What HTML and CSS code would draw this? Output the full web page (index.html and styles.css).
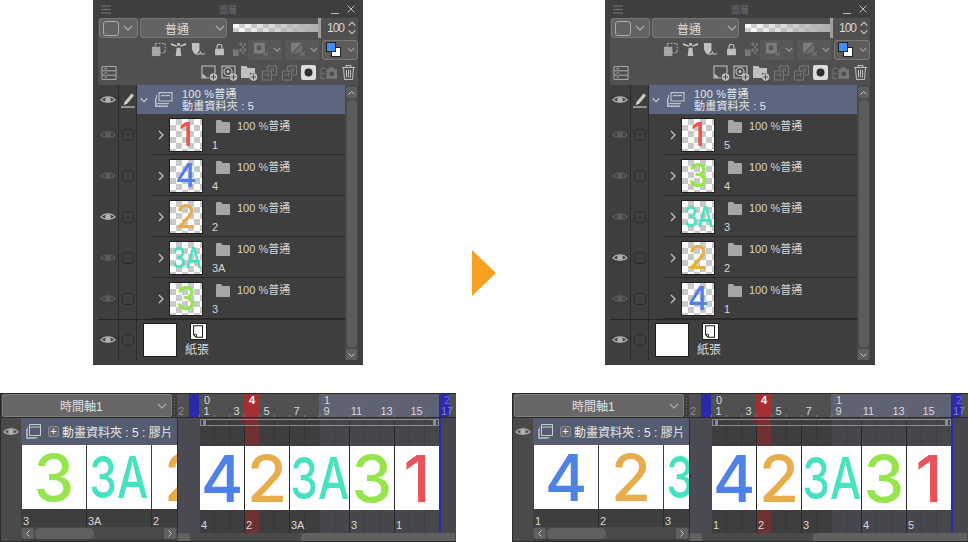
FILE: index.html
```html
<!DOCTYPE html>
<html>
<head>
    <title>Layer order and timeline</title>
    <link rel="stylesheet" href="styles.css">
</head>
<body>
    <svg class="icon-defs" width="0" height="0">
        <symbol id="i-eye" viewBox="0 0 16 16"><path d="M1 8C4 3.8 12 3.8 15 8 12 10.8 4 10.8 1 8Z" fill="none" stroke="currentColor" stroke-width="1.3"/><circle cx="8" cy="7.8" r="2.8" fill="currentColor"/></symbol>
        <symbol id="i-pen" viewBox="0 0 16 16"><path d="M4.5 10L11.5 1.5 14 3.5 7 12 3.5 13Z" fill="currentColor"/><path d="M1 15H15" stroke="currentColor" stroke-width="1.2"/></symbol>
        <symbol id="i-right" viewBox="0 0 8 12"><path d="M2 2L6 6 2 10" fill="none" stroke="currentColor" stroke-width="1.3"/></symbol>
        <symbol id="i-down" viewBox="0 0 12 8"><path d="M2 2L6 6 10 2" fill="none" stroke="currentColor" stroke-width="1.3"/></symbol>
        <symbol id="i-up" viewBox="0 0 12 8"><path d="M2 6L6 2 10 6" fill="none" stroke="currentColor" stroke-width="1.3"/></symbol>
        <symbol id="i-folder" viewBox="0 0 14 13"><path d="M0 1Q0 0 1 0H5L6.5 2H13Q14 2 14 3V12Q14 13 13 13H1Q0 13 0 12Z" fill="currentColor"/></symbol>
        <symbol id="i-stack" viewBox="0 0 18 15"><path d="M4 .6H17V9H4Z" fill="none" stroke="currentColor" stroke-width="1.2"/><path d="M6 3H15V4.2H6Z" fill="currentColor"/><path d="M2 3V11H14V12.2H1V3ZM0 6V15H13V13.5H1.5V6Z" fill="currentColor"/></symbol>
        <symbol id="i-clip" viewBox="0 0 16 16"><path d="M1 5H10V15H1Z" fill="currentColor" opacity=".75"/><path d="M4.5 1.5H15V11.5H4.5Z" fill="none" stroke="currentColor" stroke-dasharray="2 1.5"/></symbol>
        <symbol id="i-light" viewBox="0 0 16 16"><path d="M6 6H10L11 15H5ZM0 1L6 3.5V5L0 3.5ZM16 1L10 3.5V5L16 3.5ZM6.500 1H9.500V4H6.500Z" fill="currentColor"/></symbol>
        <symbol id="i-ref" viewBox="0 0 16 16"><path d="M1 1H9V9L6 13 4 13 1 8Z" fill="currentColor"/><path d="M5 12Q9 15 10 11L11 13 15 12.5" fill="none" stroke="currentColor" stroke-width="1.2"/></symbol>
        <symbol id="i-lock" viewBox="0 0 16 16"><path d="M2.500 7H13.500V15H2.500Z" fill="currentColor"/><path d="M5 7V4.500A3 3 0 0 1 11 4.500V7" fill="none" stroke="currentColor" stroke-width="1.4"/></symbol>
        <symbol id="i-alpha" viewBox="0 0 16 16"><path d="M8 1H11V4H8ZM13 1H15V4H13ZM11 4H13V7H11ZM8 7H11V10H8ZM13 7H15V10H13ZM11 10H13V13H11ZM1 8H7V15H1Z" fill="currentColor"/></symbol>
        <symbol id="i-ruler-x" viewBox="0 0 20 18"><path d="M1 1H14V11L11 14H1Z" fill="currentColor"/><circle cx="7" cy="7" r="3" fill="#585858"/><path d="M12 12L18 17M18 12L12 17" stroke="currentColor" stroke-width="1.2"/></symbol>
        <symbol id="i-tri-x" viewBox="0 0 20 18"><path d="M1 1H14L1 14Z" fill="currentColor"/><path d="M14 3V11L8 14H3Z" fill="currentColor" opacity=".6"/><path d="M12 12L18 17M18 12L12 17" stroke="currentColor" stroke-width="1.2"/></symbol>
        <symbol id="i-list" viewBox="0 0 16 14"><path d="M1 .5H15V13.500H1ZM1 4.800H15M1 9.200H15M3.500 2.700H6M3.500 7H6M3.500 11.300H6" fill="none" stroke="currentColor"/></symbol>
        <symbol id="i-new" viewBox="0 0 17 16"><path d="M8 13H1V1H14V8" fill="none" stroke="currentColor" stroke-width="1.1"/><path d="M1.500 8.500L6 12.500H1.500Z" fill="currentColor"/><circle cx="12.500" cy="12" r="3.800" fill="currentColor"/><path d="M12.500 9.500V14.500M10 12H15" stroke="#505050"/></symbol>
        <symbol id="i-new2" viewBox="0 0 17 16"><path d="M8 13H1V1H14V8" fill="none" stroke="currentColor" stroke-width="1.1"/><circle cx="7" cy="6.500" r="4" fill="none" stroke="currentColor" stroke-width="1.1"/><circle cx="7" cy="6.500" r="1.500" fill="currentColor"/><circle cx="12.500" cy="12" r="3.800" fill="currentColor"/><path d="M12.500 9.500V14.500M10 12H15" stroke="#505050"/></symbol>
        <symbol id="i-newfolder" viewBox="0 0 17 16"><path d="M0 1H5L7 3H14V8H9V13H0Z" fill="currentColor"/><circle cx="12.500" cy="12" r="3.800" fill="currentColor"/><path d="M12.500 9.500V14.500M10 12H15" stroke="#505050"/></symbol>
        <symbol id="i-merge" viewBox="0 0 16 16"><path d="M6 5V1H15V10H11M1 6H10V15H1Z" fill="none" stroke="currentColor" stroke-width="1.1"/><path d="M3 10H7M7 8V12M9 4H12V7" fill="none" stroke="currentColor"/></symbol>
        <symbol id="i-mask" viewBox="0 0 15 15"><path d="M2 0H13Q15 0 15 2V13Q15 15 13 15H2Q0 15 0 13V2Q0 0 2 0Z" fill="currentColor"/><circle cx="7.500" cy="7.500" r="4" fill="#2e2e2e"/></symbol>
        <symbol id="i-camera" viewBox="0 0 18 14"><path d="M1 2H6M1 2V13H6" fill="none" stroke="currentColor"/><path d="M7 3H9L10 1H14L15 3H18V13H7Z" fill="currentColor"/><circle cx="12.500" cy="8" r="2.500" fill="#505050"/><path d="M2 7.500H6" stroke="currentColor"/></symbol>
        <symbol id="i-trash" viewBox="0 0 13 15"><path d="M0 2.500H13M4 2.500V.5H9V2.500M1.500 2.500L2.500 14.500H10.500L11.500 2.500M4.500 5V12.500M6.500 5V12.500M8.500 5V12.500" fill="none" stroke="currentColor"/></symbol>
        <symbol id="i-menu" viewBox="0 0 10 9"><path d="M0 1H10M0 4.500H10M0 8H10" stroke="currentColor"/></symbol>
        <symbol id="i-close" viewBox="0 0 8 8"><path d="M.5 .5L7.500 7.500M7.500 .5L.5 7.500" stroke="currentColor"/></symbol>
        <symbol id="i-page" viewBox="0 0 14 16"><path d="M1 1H12V15H4L1 12Z" fill="none" stroke="#222" stroke-width="1.300"/><path d="M1 11.500H4.500V15" fill="none" stroke="#222"/></symbol>
        <symbol id="i-film" viewBox="0 0 15 15"><path d="M3.500 .5H14.500V11.500H3.500Z" fill="none" stroke="currentColor"/><path d="M3.500 3H14.500" stroke="currentColor"/><path d="M1.500 3V13.500H12M.5 5V14.500H10" fill="none" stroke="currentColor" stroke-width=".7"/></symbol>
    </svg>

    <div class="page">
        <!-- before -->
        <div class="side">
            <div class="side-top">
                <div class="layer-panel">
                    <div class="panel-title">
                        <svg class="title-menu"><use href="#i-menu"/></svg>
                        <span class="title-text">圖層</span>
                        <span class="title-min"></span>
                        <svg class="title-close"><use href="#i-close"/></svg>
                    </div>
                    <div class="toolbar">
                        <div class="tool-row tool-row-a">
                            <div class="dropdown dd-shape"><span class="shape-box"></span><svg class="dd-arrow"><use href="#i-down"/></svg></div>
                            <div class="dropdown dd-blend"><span class="dd-label">普通</span><svg class="dd-arrow"><use href="#i-down"/></svg></div>
                            <div class="opacity-bar"></div>
                            <span class="opacity-handle"></span>
                            <span class="opacity-value">100</span>
                            <div class="spinner"><svg><use href="#i-up"/></svg><svg><use href="#i-down"/></svg></div>
                        </div>
                        <div class="tool-row tool-row-b">
                            <svg class="tool"><use href="#i-clip"/></svg>
                            <svg class="tool"><use href="#i-light"/></svg>
                            <svg class="tool"><use href="#i-ref"/></svg>
                            <svg class="tool tool-lock"><use href="#i-lock"/></svg>
                            <svg class="tool tool-alpha"><use href="#i-alpha"/></svg>
                            <div class="tool-btn"><svg class="tool-wide"><use href="#i-ruler-x"/></svg><svg class="btn-arrow"><use href="#i-down"/></svg></div>
                            <div class="tool-btn"><svg class="tool-wide"><use href="#i-tri-x"/></svg><svg class="btn-arrow"><use href="#i-down"/></svg></div>
                            <div class="color-btn"><span class="color-swatch"><i class="swatch-white"></i><i class="swatch-blue"></i></span><svg class="btn-arrow"><use href="#i-down"/></svg></div>
                        </div>
                        <div class="tool-row tool-row-c">
                            <svg class="tool-list"><use href="#i-list"/></svg>
                            <svg class="tool-c"><use href="#i-new"/></svg>
                            <svg class="tool-c"><use href="#i-new2"/></svg>
                            <svg class="tool-c"><use href="#i-newfolder"/></svg>
                            <svg class="tool-c tool-dim"><use href="#i-merge"/></svg>
                            <svg class="tool-c tool-dim"><use href="#i-merge"/></svg>
                            <svg class="tool-mask"><use href="#i-mask"/></svg>
                            <svg class="tool-c tool-dim"><use href="#i-camera"/></svg>
                            <svg class="tool-trash"><use href="#i-trash"/></svg>
                        </div>
                    </div>
                    <div class="layer-list">
                        <div class="layer-rows">
                            <div class="layer-row folder-row">
                                <div class="eye-cell"><svg class="eye"><use href="#i-eye"/></svg></div>
                                <div class="pen-cell"><svg class="pen"><use href="#i-pen"/></svg></div>
                                <div class="folder-main">
                                    <svg class="folder-chev"><use href="#i-down"/></svg>
                                    <svg class="folder-stack"><use href="#i-stack"/></svg>
                                    <div class="folder-text"><div>100 %普通</div><div>動畫資料夾 : 5</div></div>
                                </div>
                            </div>
                            <div class="layer-row">
                                <div class="eye-cell"><svg class="eye eye-dim"><use href="#i-eye"/></svg></div>
                                <div class="pen-cell"><span class="check"></span></div>
                                <div class="layer-main">
                                    <svg class="row-chev"><use href="#i-right"/></svg>
                                    <div class="thumb c-red">1</div>
                                    <div class="layer-info"><div class="blend-line"><svg class="folder-ico"><use href="#i-folder"/></svg>100 %普通</div><div class="layer-name">1</div></div>
                                </div>
                            </div>
                            <div class="layer-row">
                                <div class="eye-cell"><svg class="eye eye-dim"><use href="#i-eye"/></svg></div>
                                <div class="pen-cell"><span class="check"></span></div>
                                <div class="layer-main">
                                    <svg class="row-chev"><use href="#i-right"/></svg>
                                    <div class="thumb c-blue">4</div>
                                    <div class="layer-info"><div class="blend-line"><svg class="folder-ico"><use href="#i-folder"/></svg>100 %普通</div><div class="layer-name">4</div></div>
                                </div>
                            </div>
                            <div class="layer-row">
                                <div class="eye-cell"><svg class="eye"><use href="#i-eye"/></svg></div>
                                <div class="pen-cell"><span class="check"></span></div>
                                <div class="layer-main">
                                    <svg class="row-chev"><use href="#i-right"/></svg>
                                    <div class="thumb c-orange">2</div>
                                    <div class="layer-info"><div class="blend-line"><svg class="folder-ico"><use href="#i-folder"/></svg>100 %普通</div><div class="layer-name">2</div></div>
                                </div>
                            </div>
                            <div class="layer-row">
                                <div class="eye-cell"><svg class="eye eye-dim"><use href="#i-eye"/></svg></div>
                                <div class="pen-cell"><span class="check"></span></div>
                                <div class="layer-main">
                                    <svg class="row-chev"><use href="#i-right"/></svg>
                                    <div class="thumb thumb-pair c-teal"><span class="squeeze">3A</span></div>
                                    <div class="layer-info"><div class="blend-line"><svg class="folder-ico"><use href="#i-folder"/></svg>100 %普通</div><div class="layer-name">3A</div></div>
                                </div>
                            </div>
                            <div class="layer-row">
                                <div class="eye-cell"><svg class="eye eye-dim"><use href="#i-eye"/></svg></div>
                                <div class="pen-cell"><span class="check"></span></div>
                                <div class="layer-main">
                                    <svg class="row-chev"><use href="#i-right"/></svg>
                                    <div class="thumb c-green">3</div>
                                    <div class="layer-info"><div class="blend-line"><svg class="folder-ico"><use href="#i-folder"/></svg>100 %普通</div><div class="layer-name">3</div></div>
                                </div>
                            </div>
                            <div class="layer-row paper-row">
                                <div class="eye-cell"><svg class="eye"><use href="#i-eye"/></svg></div>
                                <div class="pen-cell"><span class="check"></span></div>
                                <div class="paper-main">
                                    <div class="paper-swatch"></div>
                                    <div class="paper-info"><div class="paper-ico"><svg><use href="#i-page"/></svg></div><div class="paper-name">紙張</div></div>
                                </div>
                            </div>
                        </div>
                        <div class="v-scroll">
                            <div class="scroll-btn"><svg><use href="#i-up"/></svg></div>
                            <div class="scroll-thumb"></div>
                            <div class="scroll-btn"><svg><use href="#i-down"/></svg></div>
                        </div>
                    </div>
                </div>
                <div class="arrow"></div>
            </div>

            <div class="timeline">
                <div class="tl-top">
                    <div class="tl-select"><span class="tl-select-label">時間軸1</span><svg class="dd-arrow"><use href="#i-down"/></svg></div>
                    <div class="tl-grip"></div>
                    <div class="ruler">
                        <div class="ruler-secs"><span class="sec-a">0</span><span class="sec-b">4</span><span class="sec-c">1</span><span class="sec-d">2</span></div>
                        <div class="ruler-frames"><span class="frame-prev">2</span><span>1</span><span>3</span><span>5</span><span>7</span><span>9</span><span>11</span><span>13</span><span>15</span><span class="frame-next">17</span></div>
                    </div>
                </div>
                <div class="tl-body">
                    <div class="tl-left">
                        <div class="tl-eye"><svg class="eye"><use href="#i-eye"/></svg></div>
                        <div class="tl-track">
                            <div class="track-head">
                                <svg class="track-film"><use href="#i-film"/></svg>
                                <span class="track-plus">+</span>
                                <span class="track-name">動畫資料夾 : 5 : 膠片</span>
                            </div>
                            <div class="strip">
                                <div class="strip-cell c-green">3</div>
                                <div class="strip-cell cell-pair c-teal"><span class="squeeze">3A</span></div>
                                <div class="strip-cell c-orange">2</div>
                            </div>
                            <div class="strip-names"><span>3</span><span>3A</span><span>2</span></div>
                            <div class="h-scroll">
                                <span class="h-btn"><svg><use href="#i-right"/></svg></span>
                                <span class="h-thumb"></span>
                                <span class="h-btn"><svg><use href="#i-right"/></svg></span>
                            </div>
                        </div>
                    </div>
                    <div class="tl-right">
                        <div class="tl-tracks">
                            <div class="tl-sep"></div>
                            <div class="frames">
                                <div class="frames-head">
                                    <div class="range-bar"><i></i><i></i></div>
                                    <div class="head-cells"><span class="w3"></span><span class="w3"></span><span class="w4"></span><span class="w3"></span><span class="w3"></span></div>
                                </div>
                                <div class="frame-cells">
                                    <div class="w3 frame-cell c-blue">4</div>
                                    <div class="w3 frame-cell c-orange">2</div>
                                    <div class="w4 frame-cell cell-pair c-teal"><span class="squeeze">3A</span></div>
                                    <div class="w3 frame-cell c-green">3</div>
                                    <div class="w3 frame-cell c-red">1</div>
                                </div>
                                <div class="frame-names"><span class="w3">4</span><span class="w3">2</span><span class="w4">3A</span><span class="w3">3</span><span class="w3">1</span></div>
                            </div>
                            <div class="frames-rest"></div>
                        </div>
                        <div class="tl-hbar"><span class="tl-hbtn"></span><span class="tl-hthumb"></span></div>
                    </div>
                </div>
            </div>
        </div>

        <!-- after -->
        <div class="side">
            <div class="side-top">
                <div class="layer-panel">
                    <div class="panel-title">
                        <svg class="title-menu"><use href="#i-menu"/></svg>
                        <span class="title-text">圖層</span>
                        <span class="title-min"></span>
                        <svg class="title-close"><use href="#i-close"/></svg>
                    </div>
                    <div class="toolbar">
                        <div class="tool-row tool-row-a">
                            <div class="dropdown dd-shape"><span class="shape-box"></span><svg class="dd-arrow"><use href="#i-down"/></svg></div>
                            <div class="dropdown dd-blend"><span class="dd-label">普通</span><svg class="dd-arrow"><use href="#i-down"/></svg></div>
                            <div class="opacity-bar"></div>
                            <span class="opacity-handle"></span>
                            <span class="opacity-value">100</span>
                            <div class="spinner"><svg><use href="#i-up"/></svg><svg><use href="#i-down"/></svg></div>
                        </div>
                        <div class="tool-row tool-row-b">
                            <svg class="tool"><use href="#i-clip"/></svg>
                            <svg class="tool"><use href="#i-light"/></svg>
                            <svg class="tool"><use href="#i-ref"/></svg>
                            <svg class="tool tool-lock"><use href="#i-lock"/></svg>
                            <svg class="tool tool-alpha"><use href="#i-alpha"/></svg>
                            <div class="tool-btn"><svg class="tool-wide"><use href="#i-ruler-x"/></svg><svg class="btn-arrow"><use href="#i-down"/></svg></div>
                            <div class="tool-btn"><svg class="tool-wide"><use href="#i-tri-x"/></svg><svg class="btn-arrow"><use href="#i-down"/></svg></div>
                            <div class="color-btn"><span class="color-swatch"><i class="swatch-white"></i><i class="swatch-blue"></i></span><svg class="btn-arrow"><use href="#i-down"/></svg></div>
                        </div>
                        <div class="tool-row tool-row-c">
                            <svg class="tool-list"><use href="#i-list"/></svg>
                            <svg class="tool-c"><use href="#i-new"/></svg>
                            <svg class="tool-c"><use href="#i-new2"/></svg>
                            <svg class="tool-c"><use href="#i-newfolder"/></svg>
                            <svg class="tool-c tool-dim"><use href="#i-merge"/></svg>
                            <svg class="tool-c tool-dim"><use href="#i-merge"/></svg>
                            <svg class="tool-mask"><use href="#i-mask"/></svg>
                            <svg class="tool-c tool-dim"><use href="#i-camera"/></svg>
                            <svg class="tool-trash"><use href="#i-trash"/></svg>
                        </div>
                    </div>
                    <div class="layer-list">
                        <div class="layer-rows">
                            <div class="layer-row folder-row">
                                <div class="eye-cell"><svg class="eye"><use href="#i-eye"/></svg></div>
                                <div class="pen-cell"><svg class="pen"><use href="#i-pen"/></svg></div>
                                <div class="folder-main">
                                    <svg class="folder-chev"><use href="#i-down"/></svg>
                                    <svg class="folder-stack"><use href="#i-stack"/></svg>
                                    <div class="folder-text"><div>100 %普通</div><div>動畫資料夾 : 5</div></div>
                                </div>
                            </div>
                            <div class="layer-row">
                                <div class="eye-cell"><svg class="eye eye-dim"><use href="#i-eye"/></svg></div>
                                <div class="pen-cell"><span class="check"></span></div>
                                <div class="layer-main">
                                    <svg class="row-chev"><use href="#i-right"/></svg>
                                    <div class="thumb c-red">1</div>
                                    <div class="layer-info"><div class="blend-line"><svg class="folder-ico"><use href="#i-folder"/></svg>100 %普通</div><div class="layer-name">5</div></div>
                                </div>
                            </div>
                            <div class="layer-row">
                                <div class="eye-cell"><svg class="eye eye-dim"><use href="#i-eye"/></svg></div>
                                <div class="pen-cell"><span class="check"></span></div>
                                <div class="layer-main">
                                    <svg class="row-chev"><use href="#i-right"/></svg>
                                    <div class="thumb c-green">3</div>
                                    <div class="layer-info"><div class="blend-line"><svg class="folder-ico"><use href="#i-folder"/></svg>100 %普通</div><div class="layer-name">4</div></div>
                                </div>
                            </div>
                            <div class="layer-row">
                                <div class="eye-cell"><svg class="eye eye-dim"><use href="#i-eye"/></svg></div>
                                <div class="pen-cell"><span class="check"></span></div>
                                <div class="layer-main">
                                    <svg class="row-chev"><use href="#i-right"/></svg>
                                    <div class="thumb thumb-pair c-teal"><span class="squeeze">3A</span></div>
                                    <div class="layer-info"><div class="blend-line"><svg class="folder-ico"><use href="#i-folder"/></svg>100 %普通</div><div class="layer-name">3</div></div>
                                </div>
                            </div>
                            <div class="layer-row">
                                <div class="eye-cell"><svg class="eye"><use href="#i-eye"/></svg></div>
                                <div class="pen-cell"><span class="check"></span></div>
                                <div class="layer-main">
                                    <svg class="row-chev"><use href="#i-right"/></svg>
                                    <div class="thumb c-orange">2</div>
                                    <div class="layer-info"><div class="blend-line"><svg class="folder-ico"><use href="#i-folder"/></svg>100 %普通</div><div class="layer-name">2</div></div>
                                </div>
                            </div>
                            <div class="layer-row">
                                <div class="eye-cell"><svg class="eye eye-dim"><use href="#i-eye"/></svg></div>
                                <div class="pen-cell"><span class="check"></span></div>
                                <div class="layer-main">
                                    <svg class="row-chev"><use href="#i-right"/></svg>
                                    <div class="thumb c-blue">4</div>
                                    <div class="layer-info"><div class="blend-line"><svg class="folder-ico"><use href="#i-folder"/></svg>100 %普通</div><div class="layer-name">1</div></div>
                                </div>
                            </div>
                            <div class="layer-row paper-row">
                                <div class="eye-cell"><svg class="eye"><use href="#i-eye"/></svg></div>
                                <div class="pen-cell"><span class="check"></span></div>
                                <div class="paper-main">
                                    <div class="paper-swatch"></div>
                                    <div class="paper-info"><div class="paper-ico"><svg><use href="#i-page"/></svg></div><div class="paper-name">紙張</div></div>
                                </div>
                            </div>
                        </div>
                        <div class="v-scroll">
                            <div class="scroll-btn"><svg><use href="#i-up"/></svg></div>
                            <div class="scroll-thumb"></div>
                            <div class="scroll-btn"><svg><use href="#i-down"/></svg></div>
                        </div>
                    </div>
                </div>
            </div>

            <div class="timeline">
                <div class="tl-top">
                    <div class="tl-select"><span class="tl-select-label">時間軸1</span><svg class="dd-arrow"><use href="#i-down"/></svg></div>
                    <div class="tl-grip"></div>
                    <div class="ruler">
                        <div class="ruler-secs"><span class="sec-a">0</span><span class="sec-b">4</span><span class="sec-c">1</span><span class="sec-d">2</span></div>
                        <div class="ruler-frames"><span class="frame-prev">2</span><span>1</span><span>3</span><span>5</span><span>7</span><span>9</span><span>11</span><span>13</span><span>15</span><span class="frame-next">17</span></div>
                    </div>
                </div>
                <div class="tl-body">
                    <div class="tl-left">
                        <div class="tl-eye"><svg class="eye"><use href="#i-eye"/></svg></div>
                        <div class="tl-track">
                            <div class="track-head">
                                <svg class="track-film"><use href="#i-film"/></svg>
                                <span class="track-plus">+</span>
                                <span class="track-name">動畫資料夾 : 5 : 膠片</span>
                            </div>
                            <div class="strip">
                                <div class="strip-cell c-blue">4</div>
                                <div class="strip-cell c-orange">2</div>
                                <div class="strip-cell cell-pair c-teal"><span class="squeeze">3A</span></div>
                            </div>
                            <div class="strip-names"><span>1</span><span>2</span><span>3</span></div>
                            <div class="h-scroll">
                                <span class="h-btn"><svg><use href="#i-right"/></svg></span>
                                <span class="h-thumb"></span>
                                <span class="h-btn"><svg><use href="#i-right"/></svg></span>
                            </div>
                        </div>
                    </div>
                    <div class="tl-right">
                        <div class="tl-tracks">
                            <div class="tl-sep"></div>
                            <div class="frames">
                                <div class="frames-head">
                                    <div class="range-bar"><i></i><i></i></div>
                                    <div class="head-cells"><span class="w3"></span><span class="w3"></span><span class="w4"></span><span class="w3"></span><span class="w3"></span></div>
                                </div>
                                <div class="frame-cells">
                                    <div class="w3 frame-cell c-blue">4</div>
                                    <div class="w3 frame-cell c-orange">2</div>
                                    <div class="w4 frame-cell cell-pair c-teal"><span class="squeeze">3A</span></div>
                                    <div class="w3 frame-cell c-green">3</div>
                                    <div class="w3 frame-cell c-red">1</div>
                                </div>
                                <div class="frame-names"><span class="w3">1</span><span class="w3">2</span><span class="w4">3</span><span class="w3">4</span><span class="w3">5</span></div>
                            </div>
                            <div class="frames-rest"></div>
                        </div>
                        <div class="tl-hbar"><span class="tl-hbtn"></span><span class="tl-hthumb"></span></div>
                    </div>
                </div>
            </div>
        </div>
    </div>
</body>
</html>
```

FILE: styles.css
```css
body {
    margin: 0;
    background-color: #fff;
    font-family: "Liberation Sans", "Noto Sans CJK TC", sans-serif;
    font-size: 11px;
    color: #d8d8d8;
    overflow: hidden;
}
svg {
    display: block;
    flex: none;
}
.icon-defs {
    position: absolute;
}
.page {
    display: grid;
    grid-template-columns: 512px 456px;
}
.side-top {
    display: flex;
    height: 393px;
    padding-left: 93px;
}
.arrow {
    width: 24px;
    height: 46px;
    margin: 250px 0 0 109px;
    background-color: #f7a023;
    clip-path: polygon(0 0, 100% 50%, 0 100%);
}

/* digit colours */
.c-red { color: #e85357; }
.c-blue { color: #4f82e6; }
.c-orange { color: #e8ad4b; }
.c-teal { color: #47e3c0; }
.c-green { color: #96e54c; }
.thumb, .strip-cell, .frame-cell {
    font-family: Inter, "Liberation Sans", sans-serif;
    font-weight: 500;
}
.squeeze {
    display: inline-block;
    transform: scaleX(.76);
    transform-origin: center;
}
.thumb-pair .squeeze, .cell-pair .squeeze {
    margin: 0 -20px;
}
.strip-cell.cell-pair, .frame-cell.cell-pair {
    font-size: 58px;
}
.thumb.thumb-pair {
    font-size: 29px;
}

/* layer panel */
.layer-panel {
    width: 260px;
    height: 360px;
    padding: 0 5px 5px;
    background-color: #3f3f3f;
}
.panel-title {
    display: flex;
    align-items: center;
    height: 18px;
    color: #777;
}
.title-menu {
    width: 10px;
    height: 9px;
    margin-left: 3px;
}
.title-text {
    margin-left: 108px;
    font-size: 9px;
    color: #6d6d6d;
}
.title-min {
    width: 8px;
    height: 1px;
    margin: 8px 0 0 94px;
    background-color: #bbb;
}
.title-close {
    width: 8px;
    height: 8px;
    margin-left: 8px;
    color: #bbb;
}
.toolbar {
    height: 67px;
    background-color: #505050;
}
.tool-row {
    display: flex;
    align-items: center;
    box-sizing: border-box;
}
.tool-row-a {
    align-items: flex-start;
    height: 21px;
    padding-left: 1px;
}
.tool-row-a .opacity-bar {
    margin-top: 6px;
}
.tool-row-a .opacity-value {
    line-height: 20px;
}
.tool-row-a .spinner {
    margin-top: 2px;
}
.tool-row-b {
    height: 25px;
    padding: 0 0 4px 53px;
    color: #c0c0c0;
}
.tool-row-c {
    height: 21px;
    padding: 0 0 4px 3px;
    color: #c0c0c0;
}
.dropdown {
    display: flex;
    align-items: center;
    box-sizing: border-box;
    height: 20px;
    background-color: #636363;
    border: 1px solid #777;
    border-radius: 3px;
}
.dd-shape {
    width: 39px;
    padding-left: 3px;
}
.shape-box {
    width: 14px;
    height: 13px;
    border: 1px solid #aaa;
    border-radius: 3px;
}
.dd-arrow {
    width: 12px;
    height: 8px;
    color: #a8a8a8;
}
.dd-shape .dd-arrow {
    margin-left: 3px;
}
.dd-blend {
    width: 87px;
    margin-left: 2px;
}
.dd-label {
    margin-left: 24px;
    font-size: 12px;
    color: #ddd;
}
.dd-blend .dd-arrow {
    margin-left: 25px;
}
.opacity-bar {
    width: 85px;
    height: 8px;
    margin-left: 6px;
    background:
        linear-gradient(90deg, rgba(185,185,185,0), #b0b0b0 95%),
        repeating-conic-gradient(#d0d0d0 0 25%, #fff 0 50%) 0 0 / 12px 8px;
}
.opacity-handle {
    width: 3px;
    height: 20px;
    background-color: #a0a0a0;
}
.opacity-value {
    margin-left: 6px;
    font-size: 12px;
    letter-spacing: -1px;
}
.spinner {
    margin-left: 3px;
    color: #c8c8c8;
}
.spinner svg {
    width: 10px;
    height: 8px;
}
.tool {
    width: 15px;
    height: 15px;
    margin-right: 5px;
}
.tool-lock {
    width: 13px;
    margin: 0 6px 0 2px;
}
.tool-alpha {
    margin-right: 1px;
    color: #777;
}
.tool-dim {
    color: #777;
}
.tool-btn {
    display: flex;
    align-items: center;
    width: 34px;
    height: 20px;
    margin-right: 2px;
    padding-left: 5px;
    box-sizing: border-box;
    color: #7c7c7c;
    background-color: #585858;
    border-radius: 2px;
}
.tool-btn + .tool-btn {
    margin-left: 1px;
}
.tool-wide {
    width: 17px;
    height: 15px;
}
.btn-arrow {
    width: 10px;
    height: 7px;
    margin-left: 2px;
    color: #999;
}
.color-btn {
    display: flex;
    align-items: center;
    box-sizing: border-box;
    width: 36px;
    height: 20px;
    margin-left: 1px;
    padding-left: 3px;
    background-color: #5c5c5c;
    border: 1px solid #777;
    border-radius: 3px;
}
.color-swatch {
    position: relative;
    width: 15px;
    height: 15px;
    margin-right: 3px;
}
.swatch-blue, .swatch-white {
    position: absolute;
}
.swatch-blue {
    left: 0;
    top: 0;
    width: 10px;
    height: 10px;
    background-color: #3d8ff0;
    border: 1px solid #222;
    box-sizing: border-box;
}
.swatch-white {
    left: 5px;
    top: 5px;
    width: 10px;
    height: 10px;
    background-color: #fff;
    border: 1px solid #222;
    box-sizing: border-box;
}
.tool-list {
    width: 16px;
    height: 14px;
    margin-right: 84px;
    color: #a8a8a8;
}
.tool-c {
    width: 17px;
    height: 16px;
    margin-right: 3px;
}
.tool-mask {
    width: 15px;
    height: 15px;
    margin-right: 4px;
    color: #ddd;
}
.tool-trash {
    width: 13px;
    height: 15px;
    margin-left: 2px;
}

/* layer rows */
.layer-list {
    display: flex;
    height: 275px;
}
.layer-rows {
    flex: 1;
    background-color: #3e3e3e;
}
.layer-row {
    display: flex;
    height: 41px;
}
.eye-cell, .pen-cell {
    display: flex;
    align-items: center;
    justify-content: center;
    flex: none;
    box-sizing: border-box;
    border-right: 1px solid #2b2b2b;
}
.eye-cell {
    width: 21px;
}
.pen-cell {
    width: 18px;
}
.eye {
    width: 16px;
    height: 16px;
    color: #b0b0b0;
}
.eye-dim {
    color: #5c5c5c;
}
.pen {
    width: 16px;
    height: 16px;
    color: #c8c8c8;
}
.check {
    width: 10px;
    height: 10px;
    border: 1px solid #2c2c2c;
    border-radius: 3px;
}
.folder-row {
    height: 29px;
}
.folder-main {
    display: flex;
    align-items: center;
    flex: 1;
    background-color: #5c6680;
}
.folder-chev {
    width: 10px;
    height: 8px;
    margin-left: 2px;
    color: #d0d0d0;
}
.folder-stack {
    width: 18px;
    height: 15px;
    margin-left: 6px;
    color: #bcc0c8;
}
.folder-text {
    margin-left: 9px;
    font-size: 11px;
    line-height: 12px;
    letter-spacing: .2px;
    color: #e6e6e6;
}
.layer-main {
    display: flex;
    align-items: center;
    flex: 1;
    box-sizing: border-box;
    margin-left: 14px;
    padding-top: 2px;
    border-bottom: 1px solid #282828;
}
.row-chev {
    width: 8px;
    height: 12px;
    margin: 0 4px 0 6px;
    color: #c0c0c0;
}
.thumb {
    box-sizing: border-box;
    width: 34px;
    height: 34px;
    border: 1px solid #1e1e1e;
    text-align: center;
    font-size: 32px;
    line-height: 32px;
    white-space: nowrap;
    background: repeating-conic-gradient(#c9c9c9 0 25%, #fff 0 50%) 0 0 / 12px 12px;
}
.layer-info {
    display: flex;
    flex-direction: column;
    justify-content: space-between;
    height: 34px;
    margin-left: 9px;
    opacity: .99;
}
.blend-line {
    display: flex;
    align-items: center;
    line-height: 14px;
}
.folder-ico {
    width: 14px;
    height: 13px;
    margin: 2px 7px 0 4px;
    color: #a8a8a8;
}
.layer-name {
    line-height: 12px;
    margin-bottom: 1px;
}
.paper-row {
    height: 40px;
    border-top: 1px solid #282828;
}
.paper-main {
    display: flex;
    flex: 1;
    align-items: flex-start;
    padding: 3px 0 0 6px;
}
.paper-swatch {
    width: 34px;
    height: 34px;
    background-color: #fff;
    border: 1px solid #1e1e1e;
    box-sizing: border-box;
}
.paper-info {
    margin-left: 8px;
}
.paper-ico {
    box-sizing: border-box;
    width: 17px;
    height: 17px;
    margin-left: 5px;
    padding: 1px;
    background-color: #fff;
    border: 1px solid #1e1e1e;
}
.paper-ico svg {
    width: 13px;
    height: 13px;
}
.paper-name {
    margin-top: 3px;
    font-size: 12px;
    line-height: 14px;
}
.v-scroll {
    display: flex;
    flex-direction: column;
    align-items: center;
    box-sizing: border-box;
    width: 13px;
    padding-top: 2px;
    background-color: #4a4a4a;
}
.scroll-btn {
    display: flex;
    align-items: center;
    justify-content: center;
    width: 11px;
    height: 11px;
    background-color: #5f5f5f;
    color: #ccc;
    border-radius: 2px;
}
.scroll-btn svg {
    width: 9px;
    height: 6px;
}
.scroll-thumb {
    flex: 1;
    width: 10px;
    margin: 1px 0;
    background-color: #5b5b5b;
    border-radius: 5px;
}

/* timeline */
.timeline {
    box-sizing: border-box;
    width: 456px;
    height: 149px;
    background-color: #3e3e3e;
    border: 1px solid #2a2a2a;
    border-width: 1px 0 1px 1px;
}
.tl-top {
    display: flex;
    height: 24px;
    border-bottom: 1px solid #2a2a2a;
    box-sizing: border-box;
}
.tl-select {
    display: flex;
    align-items: center;
    flex: none;
    box-sizing: border-box;
    width: 170px;
    margin-left: 1px;
    background-color: #676767;
    border: 1px solid #7d7d7d;
    border-radius: 2px;
}
.tl-select-label {
    margin-left: 57px;
    font-size: 12px;
    white-space: nowrap;
    color: #e0e0e0;
}
.tl-select .dd-arrow {
    margin-left: 53px;
}
.tl-grip {
    flex: none;
    width: 5px;
    background: radial-gradient(circle, #777 0 1px, transparent 1px) 1px 0 / 3px 3px;
}
.ruler {
    flex: 1;
    min-width: 0;
    background:
        linear-gradient(90deg, transparent 12px, #2a2aa8 12px, #2a2aa8 22px, transparent 22px),
        linear-gradient(90deg, transparent 67px, #a52f2f 67px, #a52f2f 83px, transparent 83px),
        linear-gradient(90deg, transparent 142px, #5f6272 142px, #5f6272 262px, #2a2aa8 262px, #2a2aa8 272px, transparent 272px),
        #505050;
}
.ruler-secs {
    display: flex;
    height: 11px;
    padding-left: 22px;
    line-height: 12px;
}
.ruler-secs span {
    box-sizing: border-box;
    padding-left: 5px;
}
.sec-a { width: 45px; }
.sec-b { width: 75px; font-weight: bold; color: #fff; }
.sec-c { width: 120px; }
.sec-d { color: #6a6ae0; }
.ruler-frames {
    display: flex;
    height: 12px;
    line-height: 13px;
    background: repeating-linear-gradient(90deg, #7c7c7c 0 1px, transparent 1px 15px) 22px 100% / 240px 2px no-repeat;
}
.ruler-frames span {
    flex: none;
    box-sizing: border-box;
    width: 30px;
    padding-right: 15px;
    text-align: center;
}
.ruler-frames .frame-prev {
    width: 22px;
    padding: 0 0 0 1px;
    text-align: left;
    color: #8a8a8a;
}
.ruler-frames .frame-next {
    width: 16px;
    padding: 0;
    color: #7d7dd8;
}
.tl-body {
    display: flex;
    height: 123px;
}
.tl-left {
    display: flex;
    width: 176px;
    flex: none;
    background-color: #4a4a4a;
}
.tl-eye {
    display: flex;
    justify-content: center;
    width: 20px;
    padding-top: 6px;
    box-sizing: border-box;
}
.tl-track {
    width: 156px;
    overflow: hidden;
    background-color: #3e3e3e;
}
.track-head {
    display: flex;
    align-items: center;
    height: 27px;
    box-sizing: border-box;
    background-color: #555c70;
    color: #ccc;
}
.track-film {
    width: 15px;
    height: 15px;
    margin-left: 5px;
}
.track-plus {
    box-sizing: border-box;
    width: 11px;
    height: 11px;
    margin-left: 7px;
    background-color: #6a6a6a;
    border: 1px solid #888;
    border-radius: 2px;
    line-height: 8px;
    text-align: center;
    color: #eee;
}
.track-name {
    margin-left: 3px;
    font-size: 12px;
    white-space: nowrap;
    color: #e6e6e6;
}
.strip {
    display: flex;
    height: 64px;
    margin-left: 1px;
    overflow: hidden;
}
.strip-cell {
    flex: none;
    width: 64px;
    margin-right: 1px;
    background-color: #fff;
    text-align: center;
    font-size: 65px;
    line-height: 65px;
    white-space: nowrap;
}
.strip-names {
    display: flex;
    height: 18px;
    margin-left: 1px;
    line-height: 24px;
}
.strip-names span {
    flex: none;
    box-sizing: border-box;
    width: 65px;
    padding-left: 1px;
    border-right: 1px solid #2a2a2a;
}
.h-scroll {
    display: flex;
    align-items: center;
    height: 12px;
    padding: 0 1px;
    background-color: #4a4a4a;
}
.h-btn {
    width: 12px;
    height: 11px;
    background-color: #606060;
    color: #ccc;
    border-radius: 2px;
}
.h-btn svg {
    width: 6px;
    height: 9px;
    margin: 1px 3px;
}
.h-scroll .h-btn:first-child svg {
    transform: scaleX(-1);
}
.h-thumb {
    width: 59px;
    height: 11px;
    margin: 0 70px 0 1px;
    background-color: #606060;
    border-radius: 5px;
}
.tl-right {
    display: flex;
    flex-direction: column;
    flex: 1;
    min-width: 0;
}
.tl-tracks {
    display: flex;
    height: 115px;
}
.tl-sep {
    flex: none;
    box-sizing: border-box;
    width: 22px;
    background-color: #4a4b52;
    border-left: 1px solid #2a2a2a;
}
.frames {
    flex: none;
    width: 239px;
    border-left: 1px solid #3a3ac4;
    border-right: 2px solid #2a2ab4;
}
.w3 {
    flex: none;
    box-sizing: border-box;
    width: 45px;
    border-right: 1px solid #2a2a2a;
}
.w4 {
    flex: none;
    box-sizing: border-box;
    width: 60px;
    border-right: 1px solid #2a2a2a;
}
.head-cells .w3:last-child, .frame-cells .w3:last-child, .frame-names .w3:last-child {
    width: 44px;
    border-right: 0;
}
.frames-head {
    box-sizing: border-box;
    height: 28px;
    padding-top: 1px;
    background:
        repeating-linear-gradient(90deg, transparent 0 14px, rgba(0,0,0,.14) 14px 15px),
        linear-gradient(90deg, transparent 44px, #6f3232 44px, #6f3232 60px, transparent 60px),
        linear-gradient(90deg, transparent 119px, #45474d 119px),
        #3e3e3e;
}
.range-bar {
    display: flex;
    justify-content: space-between;
    box-sizing: border-box;
    height: 7px;
    padding: 0 2px;
    border: 1px solid #8a8a8a;
}
.range-bar i {
    width: 3px;
    background-color: #8a8a8a;
}
.head-cells {
    display: flex;
    height: 20px;
}
.frame-cells {
    display: flex;
    height: 64px;
}
.frame-cell {
    background-color: #fff;
    text-align: center;
    font-size: 65px;
    line-height: 65px;
    white-space: nowrap;
}
.frame-names {
    display: flex;
    box-sizing: border-box;
    height: 23px;
    line-height: 31px;
    background:
        repeating-linear-gradient(90deg, transparent 0 14px, rgba(0,0,0,.14) 14px 15px),
        linear-gradient(90deg, transparent 44px, #6f3232 44px, #6f3232 60px, transparent 60px),
        linear-gradient(90deg, transparent 119px, #45474d 119px),
        #3e3e3e;
}
.frame-names span {
    padding-left: 1px;
}
.frames-rest {
    flex: 1;
    background-color: #45474d;
}
.tl-hbar {
    display: flex;
    align-items: center;
    height: 8px;
    padding-left: 1px;
    background-color: #4a4a4a;
}
.tl-hbtn {
    width: 12px;
    height: 8px;
    background-color: #606060;
    border-radius: 2px 2px 0 0;
}
.tl-hthumb {
    width: 154px;
    height: 8px;
    margin-left: 111px;
    background-color: #606060;
    border-radius: 4px 0 0 0;
}
```
